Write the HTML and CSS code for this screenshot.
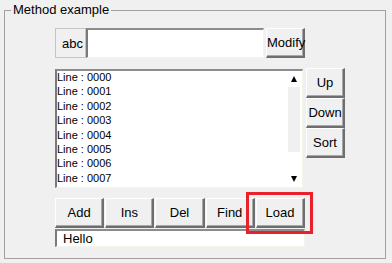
FILE: index.html
```html
<!DOCTYPE html>
<html lang="en">
<head>
    <meta charset="UTF-8">
    <title>Method example</title>
    <link rel="stylesheet" href="styles.css">
</head>
<body>
    <fieldset class="group">
        <legend class="group-title">Method example</legend>
        <div class="group-body">
            <div class="row-top">
                <div class="tag"><span class="tag-text">abc</span></div>
                <div class="field field-main"></div>
                <button class="btn btn-modify">Modify</button>
            </div>
            <div class="row-list">
                <div class="listbox">
                    <ul class="lines">
                        <li>Line : 0000</li>
                        <li>Line : 0001</li>
                        <li>Line : 0002</li>
                        <li>Line : 0003</li>
                        <li>Line : 0004</li>
                        <li>Line : 0005</li>
                        <li>Line : 0006</li>
                        <li>Line : 0007</li>
                    </ul>
                    <div class="scroll">
                        <span class="arrow arrow-up"></span>
                        <span class="thumb"></span>
                        <span class="arrow arrow-down"></span>
                    </div>
                </div>
                <div class="side">
                    <button class="btn">Up</button>
                    <button class="btn">Down</button>
                    <button class="btn">Sort</button>
                </div>
            </div>
            <div class="row-actions">
                <button class="btn">Add</button>
                <button class="btn">Ins</button>
                <button class="btn">Del</button>
                <button class="btn">Find</button>
                <button class="btn btn-marked">Load</button>
            </div>
            <div class="field field-msg">Hello</div>
        </div>
    </fieldset>
</body>
</html>
```

FILE: styles.css
```css
* { box-sizing: border-box; }
body {
    margin: 0;
    background: #f0f0f0;
    color: #000;
    font-family: 'Liberation Sans', Arial, sans-serif;
    font-size: 13px;
}
.group {
    margin: 2px 0 0 4px;
    padding: 0;
    width: 382px;
    height: 257px;
    border: 1px solid #a0a0a0;
    min-width: 0;
}
.group-title {
    margin-left: 6px;
    padding: 0 2px;
    line-height: 16px;
}
.group-body {
    padding: 10px 0 0 50px;
}
.row-top {
    display: flex;
    height: 30px;
}
.tag {
    width: 31px;
    border: 1px solid #c4c4c4;
    display: flex;
    align-items: center;
    padding-left: 6px;
}
.tag-text {
    white-space: nowrap;
}
.field {
    background: #fff;
    border-style: solid;
    border-width: 2px 1px 1px 2px;
    border-color: #8c8c8c #f4f4e8 #f4f4e8 #7a7a7a;
}
.field-main {
    width: 178px;
}
.btn {
    font-family: inherit;
    font-size: 13px;
    color: #000;
    background: #f0f0f0;
    border-style: solid;
    border-width: 1px 2px 2px 1px;
    border-color: #fff #6e6e6e #6e6e6e #fff;
    box-shadow: inset -1px -1px #a8a8a8;
    padding: 0;
    margin: 0;
    height: 30px;
    position: relative;
}
.btn-modify {
    width: 39px;
    margin-left: 2px;
}
.row-list {
    display: flex;
    gap: 3px;
    margin-top: 10px;
}
.listbox {
    width: 248px;
    height: 119px;
    margin-top: 1px;
    background: #fff;
    display: flex;
    border-style: solid;
    border-width: 2px 1px 1px 2px;
    border-color: #8c8c8c #f4f4e8 #f4f4e8 #7a7a7a;
}
.lines {
    list-style: none;
    margin: -1px 0 0;
    padding: 0;
    flex: 1;
    font-size: 11px;
    line-height: 14.4px;
}
.scroll {
    width: 12px;
    margin-right: 2px;
    display: flex;
    flex-direction: column;
    align-items: center;
    padding: 5px 0 5px;
}
.arrow {
    width: 0;
    height: 0;
    border-left: 3px solid transparent;
    border-right: 3px solid transparent;
}
.arrow-up {
    border-bottom: 6px solid #000;
}
.arrow-down {
    border-top: 6px solid #000;
    margin-top: auto;
}
.thumb {
    width: 12px;
    height: 65px;
    margin-top: 5px;
    background: #f0f0f0;
}
.side {
    display: flex;
    flex-direction: column;
    width: 39px;
}
.row-actions {
    display: flex;
    gap: 1px;
    width: 250px;
    margin-top: 10px;
}
.row-actions .btn {
    flex: 1;
}
.btn-marked::after {
    content: '';
    position: absolute;
    top: -7px;
    left: -11px;
    right: -10px;
    bottom: -8px;
    border: 3px solid #e8212b;
    pointer-events: none;
}
.field-msg {
    width: 250px;
    height: 18px;
    margin-top: 1px;
    padding-left: 6px;
    line-height: 15px;
}
```
